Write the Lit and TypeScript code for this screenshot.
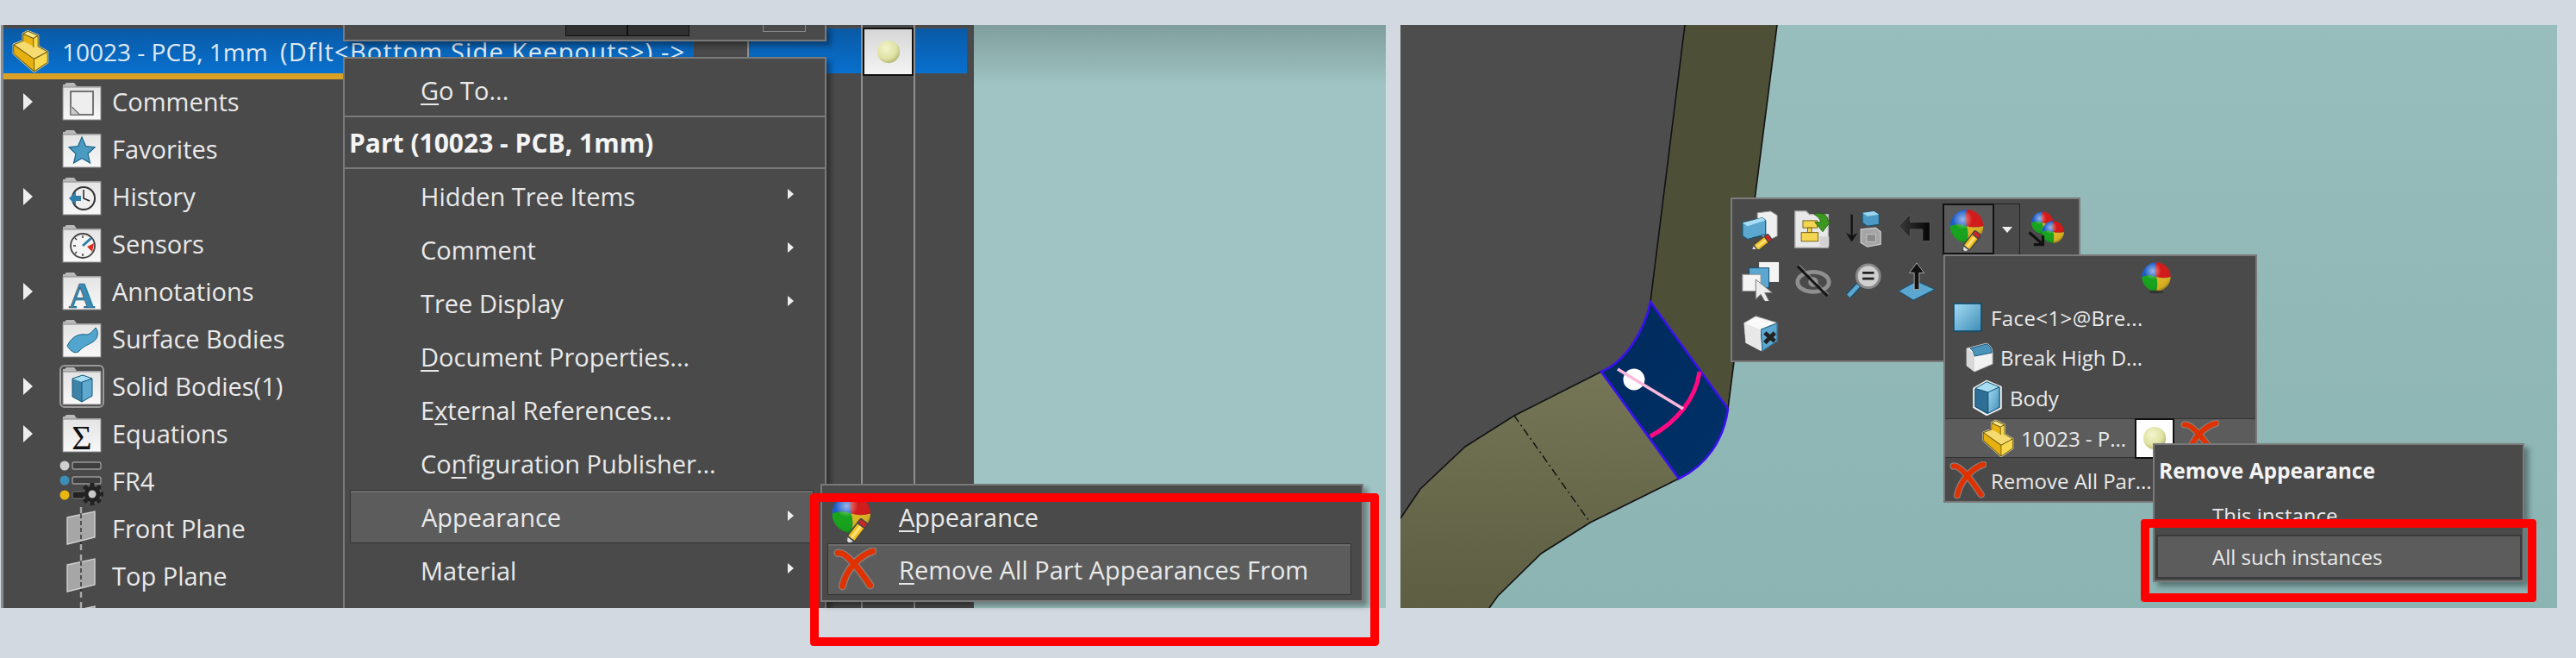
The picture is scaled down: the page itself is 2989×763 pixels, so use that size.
import { LitElement, html, css, svg } from "lit";
import { customElement } from "lit/decorators.js";

const pencil = (t: string) => svg`<g transform="${t}">
  <path d="M-13 0L-4 -5V5Z" fill="#ddd" stroke="#555" stroke-width="1.5"/>
  <path d="M-13 0L-9 -2.2V2.2Z" fill="#222"/>
  <rect x="-4" y="-5" width="19" height="10" fill="#f4c020" stroke="#444" stroke-width="1.5"/>
  <rect x="-3" y="-1.5" width="17" height="3" fill="#fbe27a"/>
  <rect x="14" y="-5" width="6" height="10" rx="2" fill="#d0242a" stroke="#444" stroke-width="1.5"/>
</g>`;

const ballShapes = svg`
  <path d="M24 4A20 20 0 0 0 4 24Q14 20 24 24Q22 14 24 4Z" fill="#1c5cc8"/>
  <path d="M24 4A20 20 0 0 1 44 24Q34 27 24 24Q22 14 24 4Z" fill="#d21a1a"/>
  <path d="M4 24A20 20 0 0 0 24 44Q27 34 24 24Q14 20 4 24Z" fill="#16a31c"/>
  <path d="M44 24A20 20 0 0 1 24 44Q27 34 24 24Q34 27 44 24Z" fill="#dcb424"/>
  <circle cx="24" cy="24" r="20" fill="url(#gloss)"/>`;

const ball = () => html`<svg class="i" viewBox="0 0 48 48">${ballShapes}<ellipse cx="24" cy="45" rx="10" ry="2" fill="#222" opacity=".6"/></svg>`;
const ballPencil = () => html`<svg class="i" viewBox="0 0 52 52"><g transform="translate(0 -2)">${ballShapes}</g>${pencil("translate(26 45) rotate(-52) scale(.95)")}</svg>`;

const redX = () => html`<svg class="i" viewBox="0 0 48 48" preserveAspectRatio="none">
  <path d="M5 6C14 4 30 26 41 42M44 4C30 8 14 24 10 43" fill="none" stroke="#8c7f7a" stroke-width="9" stroke-linecap="round"/>
  <path d="M5 6C14 4 30 26 41 42M44 4C30 8 14 24 10 43" fill="none" stroke="#e03200" stroke-width="6.4" stroke-linecap="round"/>
</svg>`;

const part = () => html`<svg class="i" viewBox="0 0 48 48" preserveAspectRatio="none">
  <path d="M21 2L34 7V19L46 25V37L29 47L3 27V17L15 13V5Z" fill="#f2c21e" stroke="#eee8c0" stroke-width="2.4" stroke-linejoin="round"/>
  <path d="M21 2L34 7L28 10L15 5Z" fill="#f8e58a"/>
  <path d="M15 13L28 18L34 19L46 25L29 33L3 17Z" fill="#f6dc70"/>
  <path d="M15 5L28 10V19L15 13Z" fill="#e8b414"/>
  <path d="M28 10L34 7V19L28 21Z" fill="#f6d64c"/>
  <path d="M3 17L29 33V47L3 27Z" fill="#e6b010"/>
  <path d="M29 33L46 25V37L29 47Z" fill="#f8d94e"/>
  <path d="M21 2L34 7V19L46 25V37L29 47L3 27V17L15 13V5ZM29 33V47M29 33L3 17M29 33L46 25M15 5L28 10L34 7M28 10V20" fill="none" stroke="#6e5c10" stroke-width="1.1" stroke-linejoin="round"/>
</svg>`;

const cube = () => html`<svg class="i" viewBox="0 0 40 48">
  <path d="M19 2L38 10V38L19 47L2 37V12Z" fill="#3d83a8" stroke="#f0f0f0" stroke-width="2.4" stroke-linejoin="round"/>
  <path d="M19 3L36 10L21 17L4 12Z" fill="#a9ddf4"/>
  <path d="M21 17L36 10V37L21 45Z" fill="url(#cubeFace)"/>
  <path d="M4 12L21 17V45L4 36Z" fill="#2f6f95"/>
  <path d="M19 3L36 10V37L21 45L4 36V12ZM4 12L21 17L36 10M21 17V45" fill="none" stroke="#0d4b6e" stroke-width="1.1"/>
</svg>`;

const faceSq = () => html`<svg class="i" viewBox="0 0 34 34"><rect x="1" y="1" width="32" height="32" fill="url(#cubeFace)" stroke="#0d4b6e" stroke-width="1.6"/></svg>`;

const breakIcon = () => html`<svg class="i" viewBox="0 0 34 36">
  <path d="M3 8L26 2Q33 5 33 14V26L12 35L3 28Z" fill="#f2f2f2" stroke="#bbb" stroke-width="1"/>
  <path d="M7 8L26 3Q32 5 32 13L12 17Q11 10 7 8Z" fill="#4b93ba" stroke="#185a7d" stroke-width="1"/>
  <path d="M3 8Q11 12 12 18V35L3 28Z" fill="#d8d8d8"/>
</svg>`;

const folder = (inner: unknown, sel = false) => html`<span class="folder ${sel ? "sel" : ""}"><svg class="i" viewBox="0 0 46 44">
  <path d="M1 6V2H3L5 0H14L17 4H45V8H1Z" fill="#b9b9b9"/>
  <rect x="1" y="5" width="44" height="38" fill="url(#folderFace)" stroke="#8a8a8a" stroke-width="1"/>
  ${inner}
</svg></span>`;

const glyphComments = svg`<rect x="10" y="10" width="26" height="27" fill="#eee" stroke="#555" stroke-width="1.6"/><path d="M10 37V27L20 37ZM12 28L20 36" fill="#ccc" stroke="#777" stroke-width="1"/>`;
const glyphStar = svg`<path d="M23 8L27.5 18.5L38 19.8L30 27.3L32.5 38L23 32.5L13.5 38L16 27.3L8 19.8L18.5 18.5Z" fill="#4a9ac2" stroke="#1b6388" stroke-width="1.2"/>`;
const glyphClock = svg`<circle cx="25" cy="24" r="13" fill="#efefef" stroke="#333" stroke-width="2"/><path d="M25 14V24L32 27" fill="none" stroke="#222" stroke-width="1.5"/><path d="M8 24L16 16V21H22V27H16V32Z" fill="#2f7ea8"/>`;
const glyphGauge = svg`<circle cx="24" cy="24" r="14" fill="#f4f4f4" stroke="#444" stroke-width="1.8"/><path d="M24 24L34 15" stroke="#2f7ea8" stroke-width="3"/><path d="M29 25L37 21L35 31Z" fill="#e0281c"/><path d="M13 24H16M24 12V15M15 15L17 17M15 33L17 31M24 36V33" stroke="#333" stroke-width="1.4"/>`;
const glyphA = svg`<text x="23" y="41" text-anchor="middle" font-family="Liberation Serif" font-weight="700" font-size="42" fill="#3d8bb5" stroke="#0f5273" stroke-width=".7">A</text>`;
const glyphWave = svg`<path d="M6 30C12 18 20 16 28 17C33 17 36 12 39 9C43 14 42 22 35 26C28 30 24 31 20 36C16 40 10 37 6 30Z" fill="#52a5cd" stroke="#1b6388" stroke-width="1"/>`;
const glyphCube = svg`<path d="M12 13L24 9L35 13V33L23 40L12 34Z" fill="#3d83a8"/><path d="M12 13L24 9L35 13L23 17Z" fill="#a9ddf4"/><path d="M23 17L35 13V33L23 40Z" fill="#5fa9cf"/><path d="M12 13L24 9L35 13L23 17M23 17V40M12 13V34L23 40L35 33V13" fill="none" stroke="#12557a" stroke-width="1"/>`;
const glyphSigma = svg`<text x="23" y="40" text-anchor="middle" font-family="Liberation Serif" font-size="40" fill="#111">Σ</text>`;

const fr4 = () => html`<svg class="i wide" viewBox="0 0 54 52">
  <circle cx="7" cy="6" r="5.5" fill="#cfcfcf"/><rect x="16" y="2" width="33" height="8" rx="2" fill="#3e3e3e" stroke="#999" stroke-width="1.4"/>
  <circle cx="7" cy="23" r="5.5" fill="#3d8fbb"/><rect x="16" y="19" width="33" height="8" rx="2" fill="#3e3e3e" stroke="#999" stroke-width="1.4"/>
  <circle cx="7" cy="40" r="5.5" fill="#eab710"/><rect x="16" y="36" width="14" height="8" rx="2" fill="#222" stroke="#777" stroke-width="1"/>
  <g transform="translate(39 39)"><circle r="10" fill="#222" stroke="#777" stroke-width="1"/>
    <path d="M-2.5 -13H2.5V13H-2.5ZM-13 -2.5H13V2.5H-13Z" fill="#222"/><path d="M-2.5 -13H2.5V13H-2.5ZM-13 -2.5H13V2.5H-13Z" fill="#222" transform="rotate(45)"/>
    <circle r="4.5" fill="#c8c8c8"/></g>
</svg>`;

const plane = () => html`<svg class="i pl" viewBox="0 0 46 52">
  <path d="M6 13L38 6V36L6 44Z" fill="#a6a6a6" stroke="#d0d0d0" stroke-width="1.4"/>
  <path d="M22 1V51" stroke="#222" stroke-width="1.3" stroke-dasharray="5 3"/>
  <path d="M22 1V8M22 44V51" stroke="#aaa" stroke-width="2.4"/>
</svg>`;

const tbEdit = () => html`<svg class="i" viewBox="0 0 48 48">
  <path d="M20 4L36 2L44 7V32L36 36L20 30Z" fill="#efefef" stroke="#999" stroke-width="1"/>
  <path d="M2 16L26 10L30 13V30L8 36L2 32Z" fill="#5ba7cf" stroke="#0f5273" stroke-width="1.2"/>
  <path d="M2 16L26 10L30 13L8 20Z" fill="#a9ddf4"/>
  ${pencil("translate(21 44) rotate(-38) scale(.9)")}
</svg>`;
const tbTree = () => html`<svg class="i" viewBox="0 0 48 50">
  <path d="M2 6V2H16L20 6H44V48H2Z" fill="#e8e8e8" stroke="#aaa" stroke-width="1.4"/>
  <rect x="12" y="14" width="18" height="9" fill="#f5d652" stroke="#6e5c10"/><rect x="18" y="23" width="5" height="6" fill="#f5d652" stroke="#6e5c10"/><rect x="10" y="29" width="21" height="11" fill="#f5d652" stroke="#6e5c10"/>
  <path d="M26 6C38 2 44 8 44 15H47L37 28L27 16H34C34 12 31 9 26 6Z" fill="#3d961f" stroke="#1e5a10" stroke-width=".8"/>
  <rect x="33" y="34" width="12" height="12" fill="#d2d2d2"/>
</svg>`;
const tbOrder = () => html`<svg class="i" viewBox="0 0 48 48">
  <path d="M9 6V32" stroke="#111" stroke-width="2.4"/><path d="M2 28L9 39L16 28L9 32Z" fill="#111"/>
  <path d="M22 4L36 2L42 6V18L28 20L22 16Z" fill="#4c9ac4" stroke="#124f72"/><path d="M22 4L36 2L42 6L28 8Z" fill="#9dd5ef"/>
  <path d="M20 24L38 22L44 27V42L28 45L20 40Z" fill="#a5a5a5" stroke="#c8c8c8" stroke-width="1.4"/><rect x="27" y="30" width="11" height="9" fill="#8a8a8a" stroke="#c6c6c6"/>
</svg>`;
const tbReturn = () => html`<svg class="i" viewBox="0 0 48 48">
  <path d="M2 20L16 6V15H40V38H31V24H16V34Z" fill="url(#darkArrow)" stroke="#5a5a5a" stroke-width="1"/>
</svg>`;
const tbBalls = () => html`<svg class="i" viewBox="0 0 52 52">
  <g transform="translate(4 0) scale(.72)">${ballShapes}</g><g transform="translate(18 12) scale(.72)">${ballShapes}</g>
  <path d="M4 30L20 44M10 46H22V34" fill="none" stroke="#111" stroke-width="3.6"/>
</svg>`;
const tbSelect = () => html`<svg class="i" viewBox="0 0 48 48">
  <rect x="22" y="1" width="24" height="24" fill="#f4f4f4"/>
  <rect x="10" y="8" width="24" height="24" fill="#5ba7cf" stroke="#124f72"/>
  <rect x="2" y="16" width="22" height="20" fill="#f4f4f4" stroke="#999"/>
  <path d="M18 22V46L24 40L30 50L34 48L29 38H38Z" fill="#ececec" stroke="#777"/>
</svg>`;
const tbEye = () => html`<svg class="i" viewBox="0 0 48 48">
  <ellipse cx="25" cy="25" rx="19" ry="12" fill="none" stroke="#8f8f8f" stroke-width="5"/>
  <circle cx="25" cy="25" r="6" fill="#8f8f8f"/>
  <path d="M6 6L42 42" stroke="#141414" stroke-width="3"/><path d="M8 4L44 40" stroke="#9a9a9a" stroke-width="1"/>
</svg>`;
const tbZoom = () => html`<svg class="i" viewBox="0 0 48 48">
  <circle cx="29" cy="18" r="14" fill="#d0d0d0" stroke="#8a8a8a" stroke-width="3"/>
  <path d="M22 14H36M22 21H36" stroke="#222" stroke-width="3"/>
  <path d="M5 42L17 29" stroke="#124f72" stroke-width="8"/><path d="M5 42L17 29" stroke="#5ba7cf" stroke-width="5"/>
</svg>`;
const tbNormal = () => html`<svg class="i" viewBox="0 0 48 48">
  <path d="M2 36L24 24L46 34L20 47Z" fill="#5ba7cf" stroke="#124f72"/>
  <path d="M21 34V14H15L24 2L33 14H27V34Z" fill="#111" stroke="#aaa"/>
</svg>`;
const tbHide = () => html`<svg class="i" viewBox="0 0 48 48">
  <path d="M4 12L18 4L44 12V34L26 46L6 36Z" fill="#fafafa" stroke="#bbb"/>
  <path d="M24 20L44 12V34L26 46Z" fill="#5ba7cf" stroke="#124f72"/>
  <path d="M4 12L24 20V46L6 36Z" fill="#e8e8e8"/>
  <path d="M29 24L41 34M41 24L29 36" stroke="#222" stroke-width="5"/>
</svg>`;
const ballSmall = () => html`<svg class="i" viewBox="0 0 48 48"><circle cx="24" cy="24" r="15" fill="url(#pale)"/></svg>`;

const tree: [boolean, unknown, string][] = [
  [true, folder(glyphComments), "Comments"],
  [false, folder(glyphStar), "Favorites"],
  [true, folder(glyphClock), "History"],
  [false, folder(glyphGauge), "Sensors"],
  [true, folder(glyphA), "Annotations"],
  [false, folder(glyphWave), "Surface Bodies"],
  [true, folder(glyphCube, true), "Solid Bodies(1)"],
  [true, folder(glyphSigma), "Equations"],
  [false, fr4(), "FR4"],
  [false, plane(), "Front Plane"],
  [false, plane(), "Top Plane"],
  [false, plane(), ""],
];

const u = (s: string) => html`<u>${s[0]}</u>${s.slice(1)}`;

@customElement("app-root")
export class AppRoot extends LitElement {
  static styles = css`
    :host { display: block; width: 2989px; height: 763px; background: #d2d9e0; overflow: hidden;
      font-family: "Open Sans", "Noto Sans", sans-serif; color: #e9e9e9; }
    * { box-sizing: border-box; }
    .defs { position: absolute; width: 0; height: 0; }
    .page { display: flex; gap: 17px; padding: 29px 0 0 1px; }
    .panel { position: relative; height: 676px; flex: none; }
    .left { width: 1607px; }
    .right { width: 1342px; }
    .clip { height: 100%; overflow: hidden; display: flex; }
    .right .clip { background: linear-gradient(#97bdbc, #8bb4b3); }
    .i { display: block; width: 100%; height: 100%; }
    .mark { position: absolute; border: 10px solid #ff0000; border-radius: 4px; z-index: 5; }
    .mark.a { left: 939px; top: 543px; width: 660px; height: 177px; }
    .mark.b { left: 859px; top: 573px; width: 459px; height: 96px; }

    /* tree */
    .tree-area { display: flex; width: 1129px; background: #4a4a4a; border-left: 3px solid #8c8c8c; flex: none; }
    .col { flex: none; border-right: 2px solid #8f8f8f; padding-top: 4px; }
    .col.t { width: 997px; }
    .col.c { width: 61px; }
    .col.r { width: 68px; border-right: none; box-shadow: 2px 0 0 #6d7d7d; padding-right: 8px; }
    .blue { background: linear-gradient(#0a5aa6, #0870ce); height: 52px; }
    .head { display: flex; }
    .head .b1 { width: 801px; display: flex; align-items: center; gap: 15px; padding-left: 9px; white-space: pre; font-size: 28px; color: #dfe9f4; overflow: hidden; }
    .head .cfg { font-size: 29px; letter-spacing: 1.2px; }
    .head .gap { width: 64px; background: #4a4a4a; border-right: 2px solid #8f8f8f; }
    .head .b2 { flex: 1; }
    .pi { width: 44px; height: 50px; flex: none; }
    .orange { width: 394px; height: 7px; background: #d9a227; margin-bottom: -2px; }
    .row { height: 55px; display: flex; align-items: center; font-size: 29px; white-space: nowrap; }
    .arrow-cell { width: 68px; padding-left: 23px; flex: none; }
    .tri { display: block; width: 0; height: 0; border-left: 11px solid #eee; border-top: 10px solid transparent; border-bottom: 10px solid transparent; }
    .ic { width: 46px; height: 44px; flex: none; margin-right: 12px; }
    .ic .wide { width: 54px; height: 52px; margin-left: -4px; margin-top: -2px; }
    .ic .pl { width: 46px; height: 52px; margin-top: -4px; }
    .folder { display: block; width: 46px; height: 44px; }
    .folder svg { overflow: visible; }
    .folder.sel { outline: 2px solid #999; outline-offset: 1px; border-radius: 3px; }
    .ballcell { height: 56px; margin-top: -1px; border: 2px solid #111; background: linear-gradient(#d6d6d6, #f4f4f4); display: flex; align-items: center; justify-content: center; }
    .ballcell span { width: 42px; height: 42px; }
    .tealL { flex: 1; background: linear-gradient(#7f9e9d 0, #9fc4c3 70px); }

    /* menus */
    .menu { position: absolute; background: #4a4a4a; border: 2px solid #7a7a7a; box-shadow: 5px 5px 6px rgba(0, 0, 0, .35); white-space: nowrap; }
    .strip { left: 397px; top: 0; width: 561px; height: 19px; display: flex; border-top: none; }
    .strip .sp { width: 256px; }
    .strip .btn { width: 72px; height: 13px; background: #303030; border: 1px solid #111; border-top: none; }
    .strip .out { margin-left: 85px; width: 50px; height: 8px; border: 1px solid #888; border-top: none; }
    .ctx { left: 397px; top: 37px; width: 561px; height: 639px; padding-top: 6px; font-size: 29px; border-bottom: none; clip-path: inset(-10px -10px 0 -10px); }
    .mi { height: 62px; display: flex; align-items: center; padding-left: 88px; position: relative; }
    .mi.line { border-bottom: 2px solid #7a7a7a; }
    .mi.hd { height: 60px; padding-left: 5px; font-weight: 700; color: #f4f4f4; font-size: 30px; }
    .mi.sub::after { content: ""; position: absolute; right: 36px; top: 23px; border-left: 7px solid #eee; border-top: 6px solid transparent; border-bottom: 6px solid transparent; }
    .mi.on { background: #5c5c5c; margin: 0 13px 0 6px; padding-left: 82px; border: 1px solid #333; box-shadow: inset 0 2px 0 #6c6c6c; }
    .mi.on.sub::after { right: 22px; }
    u { text-underline-offset: 4px; text-decoration-thickness: 2px; }
    .flyout { left: 951px; top: 532px; width: 630px; height: 137px; padding: 6px 12px 0 6px; font-size: 29px; }
    .fi { display: flex; align-items: center; height: 60px; }
    .fi.first { height: 61px; }
    .fi.on { background: #5c5c5c; border: 1px solid #333; box-shadow: inset 0 2px 0 #6c6c6c; }
    .fi .fic { width: 58px; height: 58px; flex: none; margin: 0 24px 0 1px; }
    .fi.on .fic { width: 50px; height: 50px; margin: 0 26px 0 6px; }

    /* toolbar popup */
    .tb { left: 383px; top: 200px; width: 406px; height: 191px; padding: 5px 0 0 3px; display: grid; grid-template-columns: 60px 60px 60px 61px 60px 30px 60px; grid-template-rows: repeat(3, 60px); border-color: #7c7c7c; box-shadow: none; }
    .cell { display: flex; align-items: center; justify-content: center; }
    .cell span { width: 46px; height: 46px; display: block; }
    .cell.act { background: #5a5a5a; border: 2px solid #111; border-bottom: 3px solid #111; }
    .cell.act span { width: 50px; height: 50px; }
    .cell.dd { border: 1px solid #222; border-left: none; }
    .cell.dd i { border-top: 7px solid #eee; border-left: 6px solid transparent; border-right: 6px solid transparent; }
    .cell.r3 { grid-row: 3; grid-column: 1; }

    .pop { left: 630px; top: 266px; width: 364px; height: 288px; font-size: 24px; z-index: 1; box-shadow: none; }
    .pi-row { display: flex; align-items: center; white-space: nowrap; }
    .pop .ballr { height: 48px; padding-left: 225px; }
    .pop .ballr span { width: 40px; height: 40px; }
    .pop .face { height: 46px; padding-left: 9px; letter-spacing: .4px; }
    .pop .face span { width: 34px; height: 34px; margin-right: 10px; }
    .pop .brk { height: 46px; padding-left: 22px; }
    .pop .brk span { width: 34px; height: 36px; margin-right: 8px; }
    .pop .bod { height: 48px; padding-left: 30px; }
    .pop .bod span { width: 38px; height: 42px; margin-right: 7px; }
    .pop .prt { height: 46px; padding-left: 42px; background: #5c5c5c; position: relative; border-top: 1px solid #333; border-bottom: 1px solid #333; }
    .pop .prt > span.pp { width: 38px; height: 44px; margin-right: 8px; }
    .swatch { position: absolute; left: 220px; top: -1px; width: 46px; height: 47px; background: #fff; border: 2px solid #111; }
    .swatch span { display: block; width: 42px; height: 42px; }
    .prt .xs { position: absolute; left: 273px; top: 1px; width: 45px; height: 44px; }
    .pop .rem { height: 52px; padding-left: 5px; }
    .pop .rem span { width: 43px; height: 44px; margin-right: 5px; }

    .rm { left: 873px; top: 485px; width: 431px; height: 161px; font-size: 24px; z-index: 2; }
    .rm .t { height: 58px; padding-left: 5px; font-weight: 700; color: #f4f4f4; font-size: 24.5px; display: flex; align-items: center; }
    .rm .o { height: 46px; padding-left: 67px; display: flex; align-items: center; }
    .rm .o.on { height: 51px; margin: 0 1px 0 2px; padding-left: 63px; background: #5c5c5c; border: 2px solid #3a3a3a; }
  `;

  render() {
    return html`
      <svg class="defs">
        <defs>
          <radialGradient id="gloss" cx=".38" cy=".3" r=".75">
            <stop offset="0" stop-color="#fff" stop-opacity=".55" /><stop offset=".4" stop-color="#fff" stop-opacity="0" />
            <stop offset=".85" stop-color="#000" stop-opacity=".05" /><stop offset="1" stop-color="#000" stop-opacity=".35" />
          </radialGradient>
          <radialGradient id="pale" cx=".4" cy=".35" r=".65">
            <stop offset="0" stop-color="#f4f5cf" /><stop offset=".7" stop-color="#dfe2a2" /><stop offset="1" stop-color="#b9bd7c" />
          </radialGradient>
          <linearGradient id="cubeFace" x1="0" y1="0" x2="1" y2="1"><stop offset="0" stop-color="#a4dcf6" /><stop offset="1" stop-color="#3f8cb4" /></linearGradient>
          <linearGradient id="folderFace" x1="0" y1="0" x2="0" y2="1"><stop offset="0" stop-color="#e4e4e4" /><stop offset="1" stop-color="#f8f8f8" /></linearGradient>
          <linearGradient id="darkArrow" x1="0" y1="0" x2="1" y2="0"><stop offset="0" stop-color="#3a3a3a" /><stop offset="1" stop-color="#050505" /></linearGradient>
          <linearGradient id="oliveA" x1="0" y1="0" x2="0" y2="1"><stop offset="0" stop-color="#747656" /><stop offset="1" stop-color="#5d5e42" /></linearGradient>
          <linearGradient id="patch" x1="0" y1="0" x2="1" y2="1"><stop offset="0" stop-color="#002a5c" /><stop offset="1" stop-color="#003168" /></linearGradient>
        </defs>
      </svg>
      <div class="page">
        <section class="panel left">
          <div class="clip">
            <div class="tree-area">
              <div class="col t">
                <div class="head">
                  <div class="blue b1"><span class="pi">${part()}</span><span>10023 - PCB, 1mm  <span class="cfg">(Dflt&lt;Bottom Side Keepouts&gt;) -&gt;</span></span></div>
                  <div class="gap"></div>
                  <div class="blue b2"></div>
                </div>
                <div class="orange"></div>
                ${tree.map(([a, ic, t]) => html`<div class="row">
                  <span class="arrow-cell">${a ? html`<i class="tri"></i>` : ""}</span>
                  <span class="ic">${ic}</span><span>${t}</span>
                </div>`)}
              </div>
              <div class="col c"><div class="ballcell"><span>${ballSmall()}</span></div></div>
              <div class="col r"><div class="blue"></div></div>
            </div>
            <div class="tealL"></div>
          </div>

          <div class="menu strip"><span class="sp"></span><span class="btn"></span><span class="btn"></span><span class="out"></span></div>
          <div class="menu ctx">
            <div class="mi line">${u("Go To...")}</div>
            <div class="mi hd line">Part (10023 - PCB, 1mm)</div>
            <div class="mi sub">Hidden Tree Items</div>
            <div class="mi sub">Comment</div>
            <div class="mi sub">Tree Display</div>
            <div class="mi">${u("Document Properties...")}</div>
            <div class="mi"><span>E<u>x</u>ternal References...</span></div>
            <div class="mi"><span>Co<u>n</u>figuration Publisher...</span></div>
            <div class="mi sub on">Appearance</div>
            <div class="mi sub">Material</div>
          </div>
          <div class="menu flyout">
            <div class="fi first"><span class="fic">${ballPencil()}</span>${u("Appearance")}</div>
            <div class="fi on"><span class="fic">${redX()}</span>${u("Remove All Part Appearances From")}</div>
          </div>
          <div class="mark a"></div>
        </section>

        <section class="panel right">
          <div class="clip">
            <svg class="i" viewBox="1625 29 1342 676">
              <path d="M1625 29H1955L1915 350C1908 385 1885 420 1858 431L1757 482L1700 518L1648 567L1625 601Z" fill="#4d4d4d" />
              <path d="M1955 29H2062L2005 474L1915 350Z" fill="#4e4f37" />
              <path d="M1858 431L1948 555L1845 606L1788 642L1738 691L1728 705H1625V601L1648 567L1700 518L1757 482Z" fill="url(#oliveA)" />
              <path d="M1955 29L1915 350M2062 29L2005 474M1858 431L1757 482L1700 518L1648 567L1625 601M1948 555L1845 606L1788 642L1738 691L1728 705" fill="none" stroke="#111" stroke-width="1.6" />
              <path d="M1757 482L1845 606" stroke="#111" stroke-width="1.4" stroke-dasharray="9 4 2 4" />
              <path d="M1915 350L2005 474C2000 510 1980 540 1948 555L1858 431C1885 420 1908 385 1915 350Z" fill="url(#patch)" stroke="#3a10f0" stroke-width="2.6" />
              <path d="M1972 431C1968 462 1945 490 1915 506" fill="none" stroke="#ff0a82" stroke-width="5" />
              <circle cx="1896" cy="440" r="12.5" fill="#fff" />
              <path d="M1877 428L1953 474" stroke="#fbb9dc" stroke-width="3.6" />
            </svg>
          </div>

          <div class="menu tb">
            <div class="cell"><span>${tbEdit()}</span></div>
            <div class="cell"><span>${tbTree()}</span></div>
            <div class="cell"><span>${tbOrder()}</span></div>
            <div class="cell"><span>${tbReturn()}</span></div>
            <div class="cell act"><span>${ballPencil()}</span></div>
            <div class="cell dd"><i></i></div>
            <div class="cell"><span>${tbBalls()}</span></div>
            <div class="cell"><span>${tbSelect()}</span></div>
            <div class="cell"><span>${tbEye()}</span></div>
            <div class="cell"><span>${tbZoom()}</span></div>
            <div class="cell"><span>${tbNormal()}</span></div>
            <div class="cell r3"><span>${tbHide()}</span></div>
          </div>

          <div class="menu pop">
            <div class="pi-row ballr"><span>${ball()}</span></div>
            <div class="pi-row face"><span>${faceSq()}</span>Face&lt;1&gt;@Bre...</div>
            <div class="pi-row brk"><span>${breakIcon()}</span>Break High D...</div>
            <div class="pi-row bod"><span>${cube()}</span>Body</div>
            <div class="pi-row prt"><span class="pp">${part()}</span>10023 - P...
              <div class="swatch"><span>${ballSmall()}</span></div>
              <div class="xs">${redX()}</div>
            </div>
            <div class="pi-row rem"><span>${redX()}</span>Remove All Par...</div>
          </div>

          <div class="menu rm">
            <div class="t">Remove Appearance</div>
            <div class="o">This instance</div>
            <div class="o on">All such instances</div>
          </div>
          <div class="mark b"></div>
        </section>
      </div>
    `;
  }
}
